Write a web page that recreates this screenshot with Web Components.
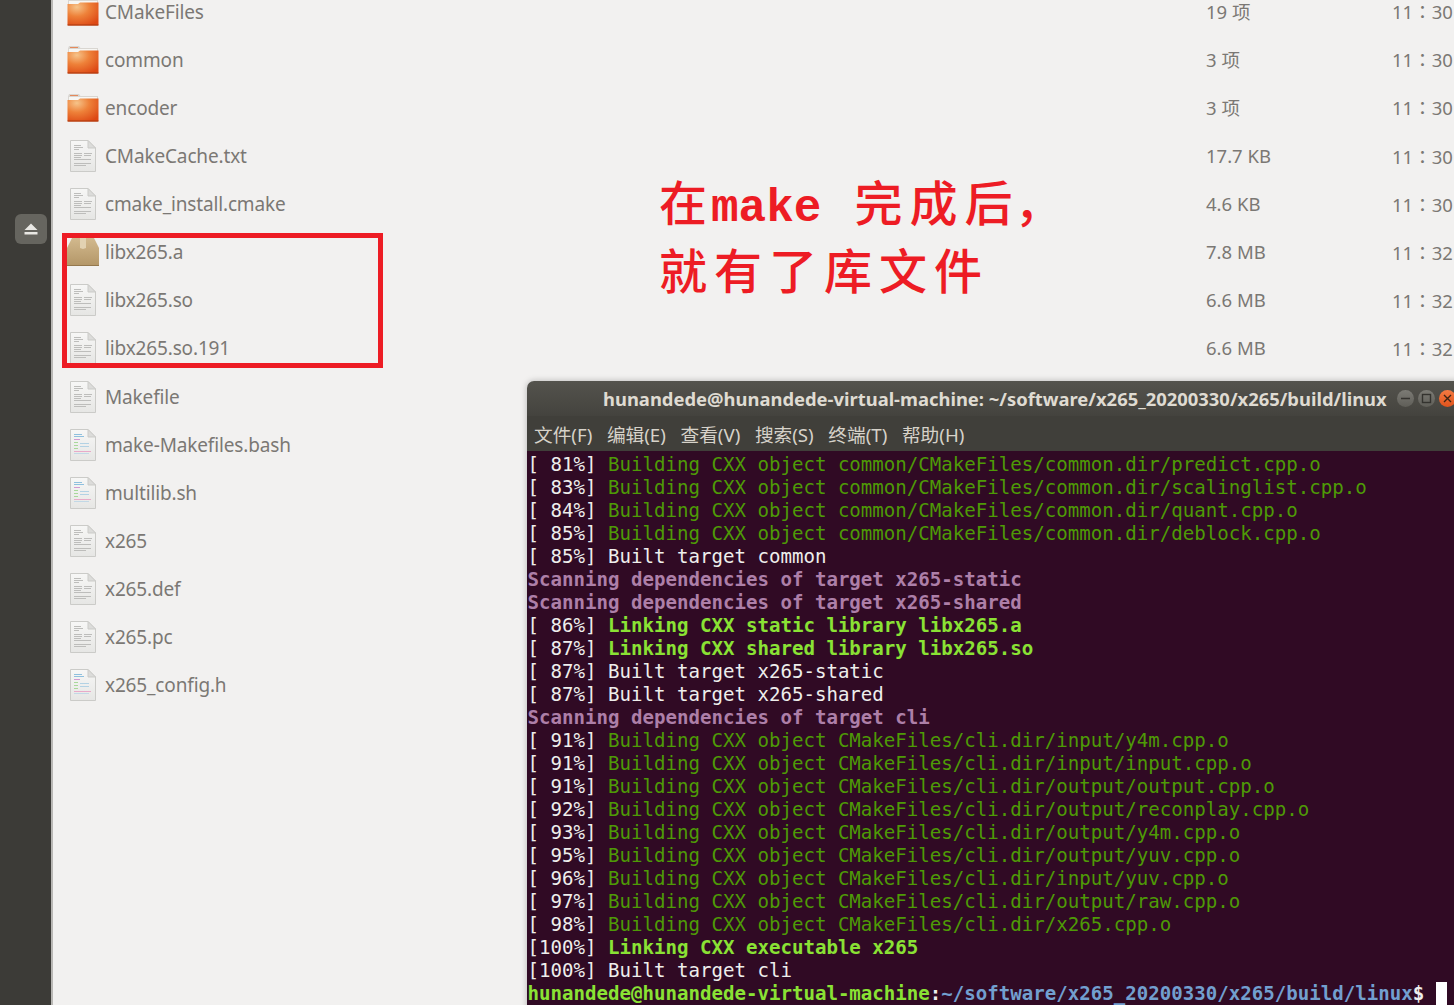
<!DOCTYPE html>
<html lang="zh-CN">
  <head>
    <meta charset="UTF-8" />
    <title>x265 build</title>
    <style>
      html, body {
        margin: 0;
        height: 100%;
        overflow: hidden;
        background: #f2f1f0;
      }
    </style>
  </head>
  <body>
    <file-manager>
      <file-row icon="folder" size="19 项" time="11：30">CMakeFiles</file-row>
      <file-row icon="folder" size="3 项" time="11：30">common</file-row>
      <file-row icon="folder" size="3 项" time="11：30">encoder</file-row>
      <file-row icon="doc" size="17.7 KB" time="11：30">CMakeCache.txt</file-row>
      <file-row icon="doc" size="4.6 KB" time="11：30">cmake_install.cmake</file-row>
      <file-row icon="package" size="7.8 MB" time="11：32">libx265.a</file-row>
      <file-row icon="doc" size="6.6 MB" time="11：32">libx265.so</file-row>
      <file-row icon="doc" size="6.6 MB" time="11：32">libx265.so.191</file-row>
      <file-row icon="doc">Makefile</file-row>
      <file-row icon="script">make-Makefiles.bash</file-row>
      <file-row icon="script">multilib.sh</file-row>
      <file-row icon="doc">x265</file-row>
      <file-row icon="doc">x265.def</file-row>
      <file-row icon="doc">x265.pc</file-row>
      <file-row icon="script">x265_config.h</file-row>
    </file-manager>
    <red-box></red-box>
    <red-note></red-note>
    <term-window>
      <term-line pct="[ 81%]" kind="build">Building CXX object common/CMakeFiles/common.dir/predict.cpp.o</term-line>
      <term-line pct="[ 83%]" kind="build">Building CXX object common/CMakeFiles/common.dir/scalinglist.cpp.o</term-line>
      <term-line pct="[ 84%]" kind="build">Building CXX object common/CMakeFiles/common.dir/quant.cpp.o</term-line>
      <term-line pct="[ 85%]" kind="build">Building CXX object common/CMakeFiles/common.dir/deblock.cpp.o</term-line>
      <term-line pct="[ 85%]">Built target common</term-line>
      <term-line kind="scan">Scanning dependencies of target x265-static</term-line>
      <term-line kind="scan">Scanning dependencies of target x265-shared</term-line>
      <term-line pct="[ 86%]" kind="link">Linking CXX static library libx265.a</term-line>
      <term-line pct="[ 87%]" kind="link">Linking CXX shared library libx265.so</term-line>
      <term-line pct="[ 87%]">Built target x265-static</term-line>
      <term-line pct="[ 87%]">Built target x265-shared</term-line>
      <term-line kind="scan">Scanning dependencies of target cli</term-line>
      <term-line pct="[ 91%]" kind="build">Building CXX object CMakeFiles/cli.dir/input/y4m.cpp.o</term-line>
      <term-line pct="[ 91%]" kind="build">Building CXX object CMakeFiles/cli.dir/input/input.cpp.o</term-line>
      <term-line pct="[ 91%]" kind="build">Building CXX object CMakeFiles/cli.dir/output/output.cpp.o</term-line>
      <term-line pct="[ 92%]" kind="build">Building CXX object CMakeFiles/cli.dir/output/reconplay.cpp.o</term-line>
      <term-line pct="[ 93%]" kind="build">Building CXX object CMakeFiles/cli.dir/output/y4m.cpp.o</term-line>
      <term-line pct="[ 95%]" kind="build">Building CXX object CMakeFiles/cli.dir/output/yuv.cpp.o</term-line>
      <term-line pct="[ 96%]" kind="build">Building CXX object CMakeFiles/cli.dir/input/yuv.cpp.o</term-line>
      <term-line pct="[ 97%]" kind="build">Building CXX object CMakeFiles/cli.dir/output/raw.cpp.o</term-line>
      <term-line pct="[ 98%]" kind="build">Building CXX object CMakeFiles/cli.dir/x265.cpp.o</term-line>
      <term-line pct="[100%]" kind="link">Linking CXX executable x265</term-line>
      <term-line pct="[100%]">Built target cli</term-line>
      <term-prompt host="hunandede@hunandede-virtual-machine" path="~/software/x265_20200330/x265/build/linux"></term-prompt>
    </term-window>

    <script>
      const UI_FONT = '"Noto Sans", "Noto Sans CJK SC", sans-serif';
      const MONO_FONT = '"DejaVu Sans Mono", "Noto Sans CJK SC", monospace';

      class FileManager extends HTMLElement {
        constructor() {
          super();
          this.attachShadow({ mode: "open" });
          this.shadowRoot.innerHTML = `
            <style>
              :host {
                display: flex;
                height: 100vh;
                overflow: hidden;
                font-family: ${UI_FONT};
              }
              .dock {
                flex: 0 0 36px;
                background: #3c3b37;
                border-right: 2px solid #b9b8b5;
                padding: 214px 0 0 15px;
              }
              .eject {
                width: 32px;
                height: 30px;
                border-radius: 6px;
                background: #66655f;
                display: flex;
                align-items: center;
                justify-content: center;
              }
              .list {
                flex: 1;
                margin-top: -12.3px;
                min-width: 0;
              }
            </style>
            <div class="dock">
              <div class="eject">
                <svg width="14" height="12" viewBox="0 0 14 12">
                  <path d="M7 0.5 13.5 7H0.5Z M0.5 9H13.5V11.5H0.5Z" fill="#e9e8e4" />
                </svg>
              </div>
            </div>
            <div class="list"><slot></slot></div>`;
        }
      }

      class FileRow extends HTMLElement {
        constructor() {
          super();
          this.attachShadow({ mode: "open" });
          const size = this.getAttribute("size") || "";
          const time = this.getAttribute("time") || "";
          this.shadowRoot.innerHTML = `
            <style>
              :host {
                display: grid;
                grid-template-columns: 32px 1fr 180px 62px;
                column-gap: 6px;
                align-items: center;
                height: 48.1px;
                padding-left: 14px;
                color: #7b7874;
                font-size: 19px;
              }
              .name { letter-spacing: -0.15px; white-space: nowrap; }
              .size { font-size: 18.5px; white-space: nowrap; margin-top: -1px; }
              .time {
                font-size: 18.5px;
                white-space: nowrap;
                margin-top: -1px;
                font-family: "Noto Sans", "Noto Sans CJK TC", sans-serif;
              }
            </style>
            <file-icon type="${this.getAttribute("icon")}"></file-icon>
            <span class="name"><slot></slot></span>
            <span class="size">${size}</span>
            <span class="time">${time}</span>`;
        }
      }

      class FileIcon extends HTMLElement {
        constructor() {
          super();
          this.attachShadow({ mode: "open" });
          const type = this.getAttribute("type");
          this.shadowRoot.innerHTML = `
            <style>
              :host { display: block; width: 32px; height: 34px; }
              svg { display: block; }
            </style>
            ${FileIcon.art(type)}`;
        }
        static textLines(rows, color) {
          return rows
            .map(([y, x, w, c]) => `<rect x="${x}" y="${y}" width="${w}" height="1" fill="${c || color}" />`)
            .join("");
        }
        static art(type) {
          if (type === "folder") {
            return `<svg width="32" height="34" viewBox="0 0 32 34">
              <defs>
                <radialGradient id="f" cx="0.3" cy="0.2" r="0.9">
                  <stop offset="0" stop-color="#f6c48a" />
                  <stop offset="0.45" stop-color="#ee8139" />
                  <stop offset="1" stop-color="#dd4814" />
                </radialGradient>
              </defs>
              <path d="M1 5.5 2 3H12L13.5 5H31V12H1Z" fill="#d9d6d1" />
              <rect x="3" y="4" width="8" height="1" fill="#e58a5c" />
              <rect x="2" y="6" width="28" height="6" fill="#f7f6f3" />
              <path d="M0.5 9H11L13 7.5H31.5V29.5Q31.5 30.5 30.5 30.5H1.5Q0.5 30.5 0.5 29.5Z" fill="url(#f)" />
              <rect x="0.5" y="29.5" width="31" height="1" fill="#a8380f" />
            </svg>`;
          }
          if (type === "package") {
            return `<svg width="32" height="34" viewBox="0 0 32 34">
              <defs>
                <linearGradient id="p" x1="0" y1="0" x2="0" y2="1">
                  <stop offset="0" stop-color="#d2b98e" />
                  <stop offset="1" stop-color="#b39667" />
                </linearGradient>
              </defs>
              <path d="M5 3H27L32 13V30Q32 31 31 31H1Q0 31 0 30V13Z" fill="url(#p)" />
              <path d="M13 3H19V13L16 14 13 13Z" fill="#e2d2b2" />
              <rect x="0" y="30" width="32" height="1" fill="#94784d" />
            </svg>`;
          }
          // pale text blocks, two short columns at the top like the Humanity text icon
          let lines = FileIcon.textLines(
            [[6, 7, 7], [8, 7, 9], [10, 7, 5], [14, 7, 8], [14, 17, 8], [16, 7, 8], [16, 17, 7], [18, 7, 7], [20, 7, 17], [24, 7, 17], [26, 7, 12]],
            "#bdbdbb"
          );
          if (type === "script") {
            lines = FileIcon.textLines(
              [[6, 7, 8, "#8fc0de"], [8, 7, 10, "#8fc0de"], [11, 7, 6, "#d29ad2"], [14, 7, 4, "#a8d89a"], [15, 13, 9, "#b3d2e4"], [17, 7, 4, "#a8d89a"], [18, 13, 9, "#b3d2e4"], [20, 7, 4, "#a8d89a"], [23, 7, 17, "#e8aac8"], [25, 7, 15, "#c2d8e6"]],
              "#bdbdbb"
            );
          }
          return `<svg width="32" height="34" viewBox="0 0 32 34">
            <defs>
              <linearGradient id="d" x1="0" y1="0" x2="0" y2="1">
                <stop offset="0" stop-color="#f7f7f6" />
                <stop offset="1" stop-color="#e6e6e4" />
              </linearGradient>
            </defs>
            <path d="M3.5 1.5H21L28.5 9V32.5H3.5Z" fill="url(#d)" stroke="#cbcbc8" />
            <path d="M21 1.5V9H28.5Z" fill="#dcdcda" stroke="#cbcbc8" />
            ${lines}
          </svg>`;
        }
      }

      // red frame drawn over the three library rows
      class RedBox extends HTMLElement {
        constructor() {
          super();
          this.attachShadow({ mode: "open" });
          this.shadowRoot.innerHTML = `
            <style>
              :host {
                position: absolute;
                left: 62px;
                top: 233px;
                width: 321px;
                height: 135px;
                box-sizing: border-box;
                border: 5px solid #ed1c24;
              }
            </style>`;
        }
      }

      class RedNote extends HTMLElement {
        constructor() {
          super();
          this.attachShadow({ mode: "open" });
          this.shadowRoot.innerHTML = `
            <style>
              :host {
                position: absolute;
                left: 659px;
                top: 167px;
                color: #ed1c24;
                font: 500 48px/67px "Noto Sans CJK SC", sans-serif;
                letter-spacing: 7px;
                white-space: nowrap;
              }
              div { height: 67px; }
              .second { padding-top: 1px; }
              .latin {
                font: 700 46px/67px "Liberation Mono", monospace;
                letter-spacing: 0;
                margin: 0 33px 0 -3px;
              }
              .tight { letter-spacing: 2px; }
            </style>
            <div>在<span class="latin">make</span>完成<span class="tight">后</span>，</div>
            <div class="second">就有了库文件</div>`;
        }
      }

      class TermWindow extends HTMLElement {
        constructor() {
          super();
          this.attachShadow({ mode: "open" });
          const menu = ["文件(F)", "编辑(E)", "查看(V)", "搜索(S)", "终端(T)", "帮助(H)"];
          this.shadowRoot.innerHTML = `
            <style>
              :host {
                position: absolute;
                left: 527px;
                top: 381px;
                width: 940px;
                height: 640px;
                display: flex;
                flex-direction: column;
                border-radius: 7px 7px 0 0;
                overflow: hidden;
                box-shadow: 0 0 6px rgba(0, 0, 0, 0.25);
                font-family: ${UI_FONT};
              }
              .title {
                height: 35px;
                flex: none;
                display: flex;
                align-items: center;
                padding-left: 76px;
                background: linear-gradient(#54534d, #44433e);
                color: #dfdbd2;
                font-weight: 700;
                font-size: 18.4px;
                white-space: nowrap;
              }
              .buttons {
                display: flex;
                gap: 4px;
                margin-left: 10px;
              }
              .menu {
                height: 35px;
                flex: none;
                display: flex;
                align-items: center;
                gap: 14.6px;
                padding-left: 7px;
                background: #403f3a;
                color: #d6d2c9;
                font-size: 18.7px;
                white-space: nowrap;
              }
              .body {
                flex: 1;
                background: #300a24;
                padding: 2px 0 0 0.5px;
                font-family: ${MONO_FONT};
                font-size: 19.1px;
                line-height: 23px;
                color: #eeeeec;
              }
            </style>
            <div class="title">
              <span>hunandede@hunandede-virtual-machine: ~/software/x265_20200330/x265/build/linux</span>
              <div class="buttons">
                <win-button type="min"></win-button>
                <win-button type="max"></win-button>
                <win-button type="close"></win-button>
              </div>
            </div>
            <div class="menu">${menu.map((m) => `<span>${m}</span>`).join("")}</div>
            <div class="body"><slot></slot></div>`;
        }
      }

      class WinButton extends HTMLElement {
        constructor() {
          super();
          this.attachShadow({ mode: "open" });
          const type = this.getAttribute("type");
          const glyph = {
            min: '<path d="M4 8.5H13" stroke="#34332f" stroke-width="1.4" />',
            max: '<rect x="4.5" y="4.5" width="8" height="8" fill="none" stroke="#34332f" stroke-width="1.4" />',
            close: '<path d="M5 5 12 12M12 5 5 12" stroke="#3c2414" stroke-width="1.4" />',
          }[type];
          const bg = type === "close" ? "linear-gradient(#f47a42, #e0531c)" : "linear-gradient(#7c7b75, #5f5e58)";
          this.shadowRoot.innerHTML = `
            <style>
              :host {
                display: block;
                width: 17px;
                height: 17px;
                border-radius: 50%;
                background: ${bg};
              }
              svg { display: block; }
            </style>
            <svg width="17" height="17" viewBox="0 0 17 17">${glyph}</svg>`;
        }
      }

      class TermLine extends HTMLElement {
        constructor() {
          super();
          this.attachShadow({ mode: "open" });
          const pct = this.getAttribute("pct");
          this.shadowRoot.innerHTML = `
            <style>
              :host { display: block; height: 23px; }
              .row { white-space: pre; }
              :host([kind="build"]) .text { color: #4e9a06; }
              :host([kind="link"]) .text { color: #8ae234; font-weight: 700; }
              :host([kind="scan"]) .text { color: #ad7fa8; font-weight: 700; }
            </style>
            <div class="row">${pct ? `<span>${pct} </span>` : ""}<span class="text"><slot></slot></span></div>`;
        }
      }

      class TermPrompt extends HTMLElement {
        constructor() {
          super();
          this.attachShadow({ mode: "open" });
          this.shadowRoot.innerHTML = `
            <style>
              :host { display: block; height: 23px; font-weight: 700; }
              .row { white-space: pre; }
              .host { color: #8ae234; }
              .path { color: #729fcf; }
              .cursor {
                display: inline-block;
                width: 11.5px;
                height: 23px;
                background: #fff;
                vertical-align: top;
              }
            </style>
            <div class="row"><span class="host">${this.getAttribute("host")}</span>:<span class="path">${this.getAttribute("path")}</span>$ <span class="cursor"></span></div>`;
        }
      }

      customElements.define("file-icon", FileIcon);
      customElements.define("file-row", FileRow);
      customElements.define("file-manager", FileManager);
      customElements.define("red-box", RedBox);
      customElements.define("red-note", RedNote);
      customElements.define("win-button", WinButton);
      customElements.define("term-window", TermWindow);
      customElements.define("term-line", TermLine);
      customElements.define("term-prompt", TermPrompt);
    </script>
  </body>
</html>
